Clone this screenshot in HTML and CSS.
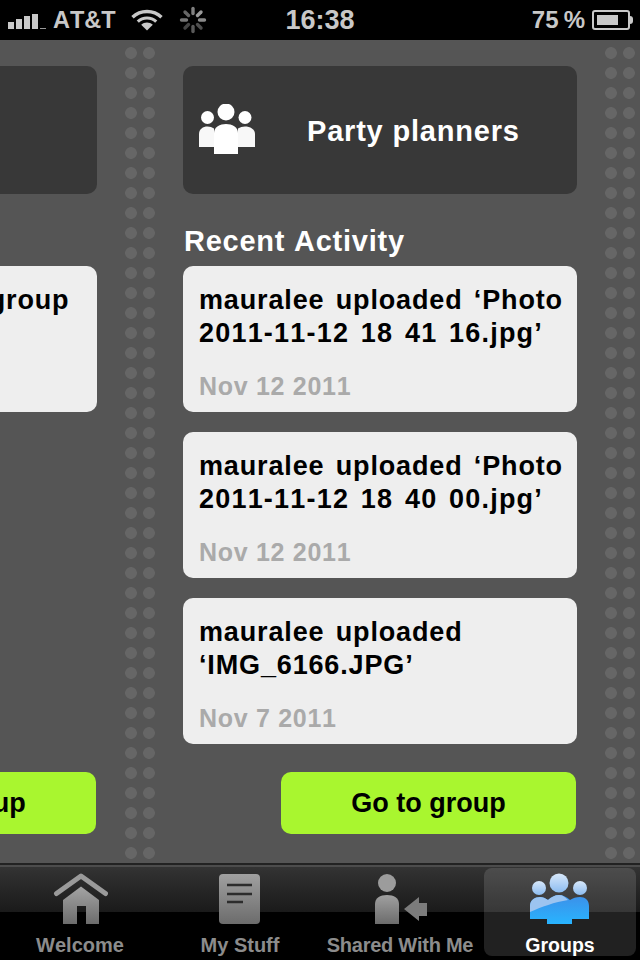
FILE: index.html
```html
<!DOCTYPE html>
<html lang="en">
<head>
    <meta charset="UTF-8">
    <meta name="viewport" content="width=device-width, initial-scale=1.0">
    <title>Groups</title>
    <link rel="stylesheet" href="styles.css">
</head>
<body>
    <!-- Status bar -->
    <div class="status">
        <div class="status-left">
            <div class="signal">
                <span class="bar bar1"></span>
                <span class="bar bar2"></span>
                <span class="bar bar3"></span>
                <span class="bar bar4"></span>
                <span class="bar bar5"></span>
            </div>
            <span class="carrier">AT&amp;T</span>
            <svg class="wifi" width="32" height="22" viewBox="0 0 32 22">
                <path d="M1.5 8.2C9.5 .5 22.5 .5 30.5 8.2" fill="none" stroke="#c8c8c8" stroke-width="3.4"/>
                <path d="M6.8 12.6C12 7.8 20 7.8 25.2 12.6" fill="none" stroke="#c8c8c8" stroke-width="3.2"/>
                <path d="M16 21.5L10.2 15.8C13.6 12.8 18.4 12.8 21.8 15.8Z" fill="#c8c8c8"/>
            </svg>
            <svg class="spinner" width="28" height="28" viewBox="0 0 28 28" fill="none" stroke-width="3.4" stroke-linecap="round">
                <path d="M14 2.500v5" stroke="#808080"/>
                <path d="M22 6l-3.500 3.500" stroke="#9a9a9a"/>
                <path d="M25.500 14h-5" stroke="#8a8a8a"/>
                <path d="M22 22l-3.500-3.500" stroke="#4e4e4e"/>
                <path d="M14 25.500v-5" stroke="#5a5a5a"/>
                <path d="M6 22l3.500-3.500" stroke="#454545"/>
                <path d="M2.500 14h5" stroke="#777"/>
                <path d="M6 6l3.500 3.500" stroke="#666"/>
            </svg>
        </div>
        <div class="time">16:38</div>
        <div class="status-right">
            <span class="percent">75 %</span>
            <div class="battery"><div class="battery-fill"></div></div>
            <div class="battery-tip"></div>
        </div>
    </div>

    <!-- Paged group list -->
    <div class="content">
        <div class="track">
            <div class="page">
                <div class="group-head"></div>
                <div class="card card-lead">
                    <div class="card-text">mauralee joins the group</div>
                </div>
                <a class="go" href="#">Go to group</a>
            </div>
            <div class="dots"></div>
            <div class="page">
                <div class="group-head">
                    <svg class="group-icon" width="58" height="52" viewBox="0 0 58 52" fill="#fff">
                        <circle cx="28" cy="8" r="8.500"/>
                        <circle cx="9.500" cy="13.500" r="6.500"/>
                        <circle cx="47" cy="13.500" r="6.500"/>
                        <path d="M1 43V30C1 25 5 22.500 9.500 22.500C12 22.500 14 23.300 16 24.500V43Z" fill="#f8f8f8"/>
                        <path d="M57 43V30C57 25 52 22.500 47 22.500C44.500 22.500 42 23.300 40 24.500V43Z" fill="#f8f8f8"/>
                        <path d="M16 50V29C16 23 22 20 28 20C34 20 40 23 40 29V50Z"/>
                    </svg>
                    <span class="group-name">Party planners</span>
                </div>
                <h2>Recent Activity</h2>
                <div class="card">
                    <div class="card-text">mauralee uploaded ‘Photo <span class="file">2011-11-12 18 41 16.jpg’</span></div>
                    <div class="card-date">Nov 12 2011</div>
                </div>
                <div class="card">
                    <div class="card-text">mauralee uploaded ‘Photo <span class="file">2011-11-12 18 40 00.jpg’</span></div>
                    <div class="card-date">Nov 12 2011</div>
                </div>
                <div class="card">
                    <div class="card-text">mauralee uploaded ‘IMG_6166.JPG’</div>
                    <div class="card-date">Nov 7 2011</div>
                </div>
                <a class="go" href="#">Go to group</a>
            </div>
            <div class="dots"></div>
        </div>
    </div>

    <!-- Tab bar -->
    <div class="tabs">
        <div class="tab">
            <svg width="56" height="54" viewBox="0 0 56 54">
                <defs><linearGradient id="grayHome" x1="0" y1="0" x2="0" y2="1"><stop offset="0" stop-color="#a4a4a4"/><stop offset="1" stop-color="#6c6c6c"/></linearGradient></defs>
                <path d="M4.500 22.500L29 5L53.500 22.500" fill="none" stroke="#9a9a9a" stroke-width="5" stroke-linecap="round" stroke-linejoin="round"/>
                <path d="M29 15.500L47 29V53H34V35H25V53H11V29Z" fill="url(#grayHome)"/>
            </svg>
            <span class="tab-label">Welcome</span>
        </div>
        <div class="tab">
            <svg width="56" height="54" viewBox="0 0 56 54">
                <defs><linearGradient id="grayDoc" x1="0" y1="0" x2="0" y2="1"><stop offset="0" stop-color="#a0a0a0"/><stop offset="1" stop-color="#6c6c6c"/></linearGradient></defs>
                <rect x="7" y="3" width="41" height="50" rx="4" fill="url(#grayDoc)"/>
                <path d="M15 14h25M15 23h25M15 31h16" stroke="#2c2c2c" stroke-width="2.500"/>
            </svg>
            <span class="tab-label">My Stuff</span>
        </div>
        <div class="tab">
            <svg width="56" height="54" viewBox="0 0 56 54">
                <defs><linearGradient id="grayShare" x1="0" y1="0" x2="0" y2="1"><stop offset="0" stop-color="#a0a0a0"/><stop offset="1" stop-color="#6c6c6c"/></linearGradient></defs>
                <circle cx="15" cy="12" r="9" fill="#9c9c9c"/>
                <path d="M3 53V33C3 27 8 24 15 24C22 24 27 27 27 33V53Z" fill="url(#grayShare)"/>
                <path d="M32 38L47 26V32H55V45H47V50Z" fill="#7c7c7c"/>
            </svg>
            <span class="tab-label tab-label-long">Shared With Me</span>
        </div>
        <div class="tab tab-active">
            <svg width="62" height="54" viewBox="0 0 62 54">
                <defs>
                    <linearGradient id="blueBody" x1="0" y1="0" x2="0" y2="1"><stop offset="0" stop-color="#3d8fe8"/><stop offset="1" stop-color="#28b4ff"/></linearGradient>
                    <linearGradient id="blueHead" x1="0" y1="0" x2="0" y2="1"><stop offset="0" stop-color="#d8e8fa"/><stop offset="1" stop-color="#8cbcf0"/></linearGradient>
                </defs>
                <circle cx="30" cy="12" r="9.500" fill="url(#blueHead)"/>
                <circle cx="10" cy="17" r="7" fill="url(#blueHead)"/>
                <circle cx="51" cy="17" r="7" fill="url(#blueHead)"/>
                <path d="M1 48V35C1 29 6 26 11 26C14 26 16 27 19 29C22 26 26 24 30 24C34 24 38 26 41 29C44 27 47 26 51 26C56 26 60 29 60 35V48H43V53H18V48Z" fill="url(#blueBody)"/>
                <path d="M1 41V35C1 29 6 26 11 26C14 26 16 27 19 29C22 26 26 24 30 24C34 24 36 26 39 29C26 31 12 36 1 41Z" fill="#9cc4f0"/>
            </svg>
            <span class="tab-label">Groups</span>
        </div>
    </div>
</body>
</html>
```

FILE: styles.css
```css
body {
    margin: 0;
    width: 640px;
    height: 960px;
    overflow: hidden;
    font-family: 'Liberation Sans', Arial, sans-serif;
    font-kerning: none;
    background: #555;
    display: flex;
    flex-direction: column;
}

/* status bar */
.status {
    height: 40px;
    flex: none;
    background: #000;
    color: #c8c8c8;
    display: grid;
    grid-template-columns: 1fr auto 1fr;
    align-items: center;
}
.status-left {
    display: flex;
    align-items: center;
    padding-left: 8px;
}
.signal {
    display: flex;
    align-items: flex-end;
    gap: 2px;
    height: 16px;
    margin-top: 1px;
}
.bar {
    width: 6px;
    background: #c8c8c8;
}
.bar1 { height: 7px; }
.bar2 { height: 10px; }
.bar3 { height: 13px; }
.bar4 { height: 15px; }
.bar5 { height: 1px; background: #999; }
.carrier {
    font-size: 23.500px;
    font-weight: bold;
    margin-left: 7px;
}
.wifi {
    margin-left: 15px;
}
.spinner {
    margin-left: 16px;
}
.time {
    font-size: 27px;
    font-weight: bold;
}
.status-right {
    display: flex;
    align-items: center;
    justify-content: flex-end;
    padding-right: 7px;
}
.percent {
    font-size: 24px;
    font-weight: bold;
    word-spacing: -1.500px;
    margin-right: 7px;
}
.battery {
    width: 28px;
    height: 10px;
    border: 2px solid #c8c8c8;
    border-radius: 3px;
    padding: 3px;
}
.battery-fill {
    width: 75%;
    height: 100%;
    background: #c8c8c8;
}
.battery-tip {
    width: 3px;
    height: 8px;
    background: #c8c8c8;
    border-radius: 0 3px 3px 0;
}

/* pages */
.content {
    height: 823px;
    flex: none;
    overflow: hidden;
}
.track {
    display: flex;
    height: 100%;
    margin-left: -297px;
}
.page {
    width: 394px;
    flex: none;
    display: flex;
    flex-direction: column;
    box-sizing: border-box;
    padding: 26px 0 29px;
}
.dots {
    width: 36px;
    flex: none;
    margin: 0 25px;
    background-image: radial-gradient(circle at center, #666 5.500px, transparent 6.200px);
    background-size: 18px 20px;
    background-position: 0 3px;
}
.group-head {
    height: 128px;
    flex: none;
    background: #383838;
    border-radius: 10px;
    display: flex;
    align-items: center;
    padding-left: 15px;
    box-sizing: border-box;
}
.group-name {
    color: #fff;
    font-size: 29px;
    font-weight: bold;
    letter-spacing: 0.800px;
    margin: 2px 0 0 51px;
}
h2 {
    margin: 30px 0 8px 1px;
    height: 34px;
    line-height: 34px;
    color: #fff;
    font-size: 29px;
    font-weight: bold;
    letter-spacing: 0.750px;
}
.card {
    height: 146px;
    flex: none;
    box-sizing: border-box;
    background: #eee;
    border-radius: 10px;
    margin-bottom: 20px;
    padding: 18px 8px 11px 16px;
    display: flex;
    flex-direction: column;
    justify-content: space-between;
}
.card-lead {
    margin-top: 72px;
}
.card-text {
    color: #000;
    font-size: 27px;
    font-weight: bold;
    line-height: 33px;
    letter-spacing: 0.850px;
    word-spacing: 3px;
}
.file {
    letter-spacing: 1.200px;
}
.card-date {
    color: #aaa;
    font-size: 25px;
    font-weight: bold;
    line-height: 30px;
    letter-spacing: 0.700px;
}
.go {
    width: 295px;
    height: 62px;
    margin-top: auto;
    align-self: flex-end;
    margin-right: 1px;
    flex: none;
    background: #a9f62f;
    border-radius: 10px;
    color: #000;
    font-size: 27px;
    font-weight: bold;
    text-decoration: none;
    display: flex;
    align-items: center;
    justify-content: center;
}

/* tab bar */
.tabs {
    height: 97px;
    flex: none;
    box-sizing: border-box;
    border-top: 2px solid #222;
    padding: 3px 0 4px;
    background: linear-gradient(to bottom, #4c4c4c 0, #4c4c4c 2px, #333 2px, #1a1a1a 47px, #000 47px);
    display: grid;
    grid-template-columns: repeat(4, 1fr);
}
.tab {
    display: flex;
    flex-direction: column;
    align-items: center;
    border-radius: 8px;
}
.tab svg {
    margin-top: 3px;
}
.tab-label {
    color: #8c8c8c;
    font-size: 20px;
    font-weight: bold;
    line-height: 22px;
    margin-top: 9px;
    white-space: nowrap;
}
.tab-label-long {
    letter-spacing: -0.250px;
}
.tab-active {
    background: rgba(255, 255, 255, 0.13);
    margin: 0 4px;
}
.tab-active .tab-label {
    color: #fff;
    font-size: 19.500px;
}
```
